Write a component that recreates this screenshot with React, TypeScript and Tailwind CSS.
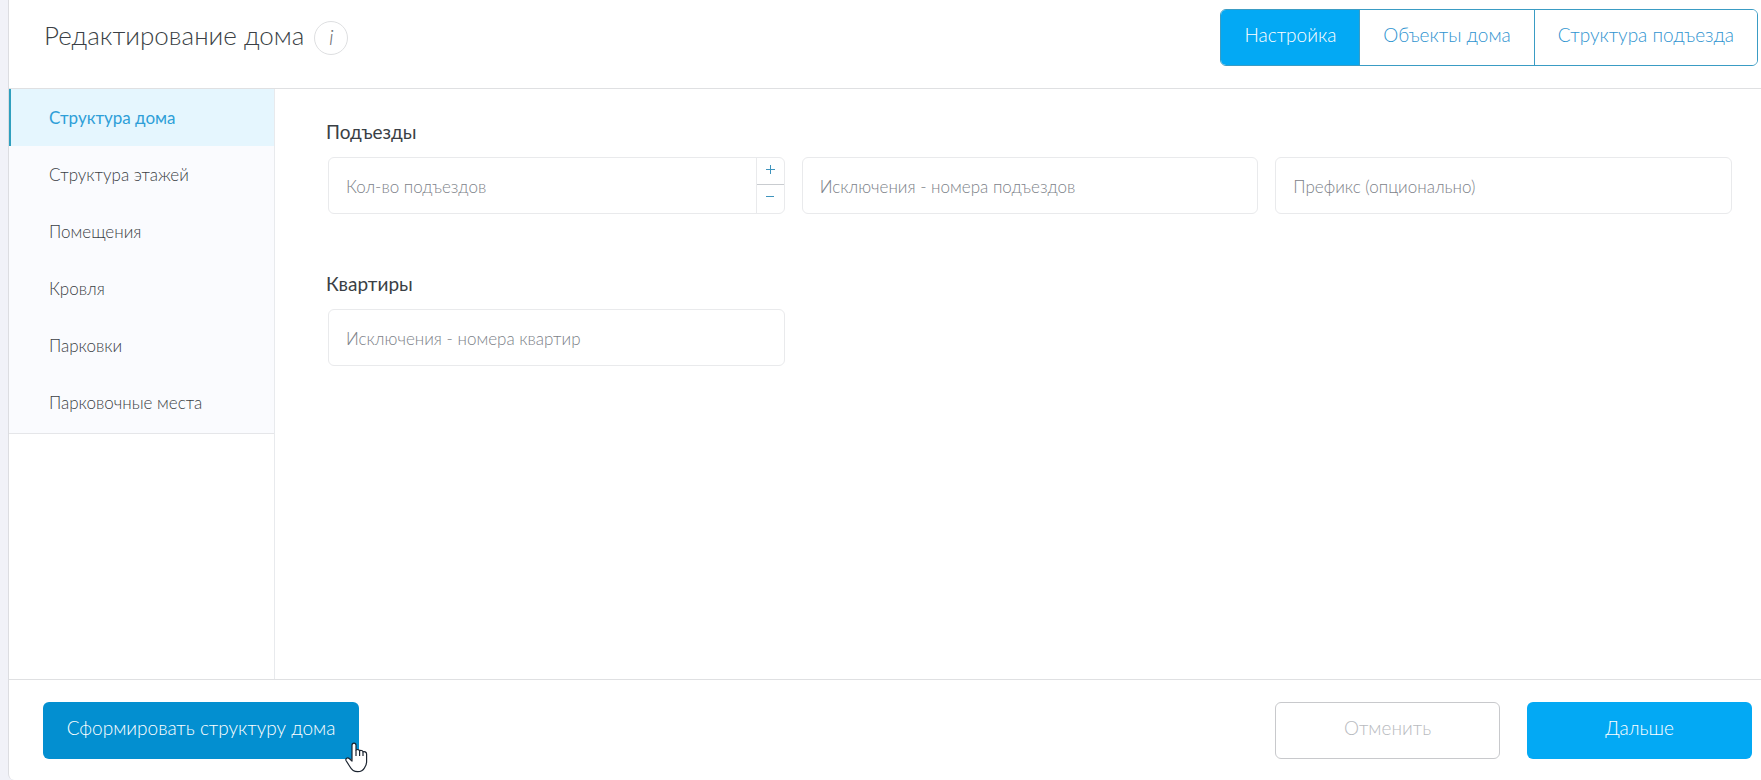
import React, { useState } from 'react';

const tabs = ['Настройка', 'Объекты дома', 'Структура подъезда'];

const sections = [
  'Структура дома',
  'Структура этажей',
  'Помещения',
  'Кровля',
  'Парковки',
  'Парковочные места',
];

type FieldProps = {
  label: string;
  value: string;
  onChange: (value: string) => void;
};

const Field = ({ label, value, onChange }: FieldProps) => (
  <input
    type="text"
    aria-label={label}
    placeholder={label}
    value={value}
    onChange={(e) => onChange(e.target.value)}
    className="h-[57px] w-full min-w-0 rounded-md border border-[#e9eaec] bg-white px-[17px] pt-0.5 text-[17px] font-light text-[#3a3f45] placeholder:text-[#7d8289] focus:outline-none focus:border-[#03a9f4]"
  />
);

// Text field with plus / minus buttons on the right edge
const NumberField = ({ label, value, onChange }: FieldProps) => {
  const step = (delta: number) => onChange(String(Math.max(0, (Number(value) || 0) + delta)));

  return (
    <div className="flex h-[57px] min-w-0 overflow-hidden rounded-md border border-[#e9eaec] bg-white">
      <input
        type="text"
        inputMode="numeric"
        aria-label={label}
        placeholder={label}
        value={value}
        onChange={(e) => onChange(e.target.value)}
        className="min-w-0 flex-1 px-[17px] pt-0.5 text-[17px] font-light text-[#3a3f45] placeholder:text-[#7d8289] focus:outline-none"
      />
      <div className="flex w-7 flex-col border-l border-[#e9eaec] text-[#3f94bd]">
        <button
          type="button"
          aria-label="Увеличить"
          onClick={() => step(1)}
          className="flex h-[27px] items-center justify-center border-b border-[#c9ccd0] pb-1"
        >
          <svg width="9" height="9" viewBox="0 0 9 9" stroke="currentColor" aria-hidden="true">
            <path d="M0 4.5h9M4.5 0v9" />
          </svg>
        </button>
        <button
          type="button"
          aria-label="Уменьшить"
          onClick={() => step(-1)}
          className="flex flex-1 items-center justify-center pb-1"
        >
          <svg width="9" height="9" viewBox="0 0 9 9" stroke="currentColor" aria-hidden="true">
            <path d="M0 3.5h8" />
          </svg>
        </button>
      </div>
    </div>
  );
};

const PointerHand = () => (
  <svg
    width="23"
    height="31"
    viewBox="0 0 23 31"
    className="pointer-events-none absolute -right-[9px] -bottom-[14px]"
    aria-hidden="true"
  >
    <path
      d="M7 18V3.2C7 .3 11 .3 11 3.2V8c.8-.8 3.2-.6 3.6.8.9-.7 3-.4 3.4 1 1.2-.6 3.6 0 3.6 2.2v7.5c0 2.5-.8 4.5-2 6.2-1.4 2.6-4 4-7 4-4 0-6.1-2-7.8-5.2L1 18.5c-.8-2 1.5-3.5 3.2-2L7 19z"
      fill="#fff"
      stroke="#1b2430"
      strokeWidth="1.2"
      strokeLinejoin="round"
    />
    <path d="M11 8v6M14.6 8.8V14M18 9.8V14" fill="none" stroke="#1b2430" strokeWidth="1.2" />
  </svg>
);

const App = () => {
  const [tab, setTab] = useState(tabs[0]);
  const [section, setSection] = useState(sections[0]);
  const [entrances, setEntrances] = useState('');
  const [entranceExceptions, setEntranceExceptions] = useState('');
  const [prefix, setPrefix] = useState('');
  const [flatExceptions, setFlatExceptions] = useState('');

  return (
    <div className="min-h-screen bg-[#f1f2f8] pl-2 font-['Lato','Open_Sans',sans-serif] text-[#3a3f45]">
      <div className="flex min-h-screen flex-col rounded-bl-md border-l border-[#dcdde1] bg-white">
        {/* Header */}
        <header className="flex items-start justify-between border-b border-[#dfe0e2] pt-[9px] pr-[3px] pb-[22px] pl-[35px]">
          <div className="flex h-[57px] items-center gap-[10px]">
            <h1 className="pb-1 text-[26px] font-light">Редактирование дома</h1>
            <button
              type="button"
              aria-label="Информация"
              className="flex size-[34px] items-center justify-center rounded-full border border-[#dedfe1] pb-0.5 text-[22px] font-light text-[#6b7075] italic"
            >
              i
            </button>
          </div>
          <nav className="flex overflow-hidden rounded-md border border-[#3a9cc4]">
            {tabs.map((name) => (
              <button
                key={name}
                type="button"
                onClick={() => setTab(name)}
                className={`h-[55px] border-r border-[#3a9cc4] px-[23px] pb-1 text-[19px] font-light last:border-r-0 ${
                  name === tab ? 'bg-[#03a9f4] text-white' : 'bg-white text-[#3094d0]'
                }`}
              >
                {name}
              </button>
            ))}
          </nav>
        </header>

        {/* Body */}
        <div className="flex flex-1">
          <aside className="w-[266px] shrink-0 border-r border-[#e8eaed]">
            <nav className="flex flex-col border-b border-[#e5e6e9] bg-[#fafbfe] pb-[2px]">
              {sections.map((name) => (
                <button
                  key={name}
                  type="button"
                  onClick={() => setSection(name)}
                  className={`h-[57px] border-l-2 pl-[38px] text-left text-[17px] ${
                    name === section
                      ? 'border-[#2f9fbe] bg-[#e5f6fe] font-normal text-[#2e9fd8]'
                      : 'border-transparent font-light'
                  }`}
                >
                  {name}
                </button>
              ))}
            </nav>
          </aside>

          <main className="flex min-w-0 flex-1 flex-col gap-14 pt-[29px] pr-[29px] pl-[51px]">
            <section>
              <h2 className="h-[39px] text-[19px] font-normal">Подъезды</h2>
              <div className="grid grid-cols-3 gap-[17px] pl-0.5">
                <NumberField label="Кол-во подъездов" value={entrances} onChange={setEntrances} />
                <Field
                  label="Исключения - номера подъездов"
                  value={entranceExceptions}
                  onChange={setEntranceExceptions}
                />
                <Field label="Префикс (опционально)" value={prefix} onChange={setPrefix} />
              </div>
            </section>
            <section>
              <h2 className="h-[39px] text-[19px] font-normal">Квартиры</h2>
              <div className="grid grid-cols-3 gap-[17px] pl-0.5">
                <Field
                  label="Исключения - номера квартир"
                  value={flatExceptions}
                  onChange={setFlatExceptions}
                />
              </div>
            </section>
          </main>
        </div>

        {/* Footer */}
        <footer className="flex items-center justify-between border-t border-[#dfe0e2] pt-[22px] pr-[9px] pb-[21px] pl-[34px]">
          <div className="relative">
            <button
              type="button"
              className="h-[57px] w-[316px] rounded-md bg-[#038fd0] pb-1 text-[19px] font-light whitespace-nowrap text-white"
            >
              Сформировать структуру дома
            </button>
            <PointerHand />
          </div>
          <div className="flex gap-[27px]">
            <button
              type="button"
              className="h-[57px] w-[225px] rounded-md border border-[#c8c9cc] bg-white pb-1 text-[19px] font-light text-[#b9bbc0]"
            >
              Отменить
            </button>
            <button
              type="button"
              className="h-[57px] w-[225px] rounded-md bg-[#03a9f4] pb-1 text-[19px] font-light text-white"
            >
              Дальше
            </button>
          </div>
        </footer>
      </div>
    </div>
  );
};

export default App;
